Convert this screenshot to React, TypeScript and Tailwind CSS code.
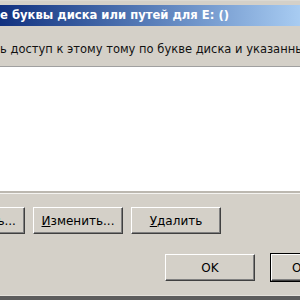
import React from 'react';

const btn =
  'h-[27px] w-[90px] shrink-0 bg-[#d4d0c8] border-t border-l border-t-white border-l-white border-b border-r border-b-[#404040] border-r-[#404040] shadow-[inset_-1px_-1px_#808080] text-black text-[12px] flex items-center justify-center whitespace-nowrap';

const App: React.FC = () => (
  <div className="w-[300px] h-[300px] overflow-hidden bg-[#d4d0c8] flex flex-col font-['DejaVu_Sans',sans-serif] text-black">
    {/* рамка окна */}
    <div className="h-[5px] shrink-0 border-t border-[#dcd9d2] bg-[#d4d0c8]" />

    {/* заголовок */}
    <div className="h-[21px] shrink-0 bg-gradient-to-r from-[#12317f] to-[#a8ccf2] text-white font-bold text-[11.6px] flex items-center whitespace-nowrap">
      е буквы диска или путей для E: ()
    </div>

    <div className="h-[40px] shrink-0 pt-[16px] text-[11.5px] leading-[14px] whitespace-nowrap text-[#111]">
      ь доступ к этому тому по букве диска и указанным путям:
    </div>

    {/* список */}
    <div className="h-[125px] shrink-0 bg-white border-t border-[#a0a0a0]" />
    <div className="h-[2px] shrink-0 bg-[#bcb8b0]" />
    <div className="h-[1px] shrink-0 bg-[#f4f3f0]" />

    <div className="h-[13px] shrink-0" />
    <div className="flex gap-[8px] ml-[-65px]">
      <div className={btn}>Добавить...</div>
      <div className={btn}>
        <span className="underline">И</span>зменить...
      </div>
      <div className={btn}>
        <span className="underline">У</span>далить
      </div>
    </div>

    <div className="h-[20px] shrink-0" />
    <div className="flex pl-[165px] gap-[15px]">
      <div className={btn}>OK</div>
      <div className="border border-black shrink-0 -mt-px">
        <div className={btn}>Отмена</div>
      </div>
    </div>

    <div className="flex-1" />
    <div className="h-[1px] shrink-0 bg-[#e4e1db]" />
    <div className="h-[4px] shrink-0 bg-[#5c5c5c]" />
  </div>
);

export default App;
